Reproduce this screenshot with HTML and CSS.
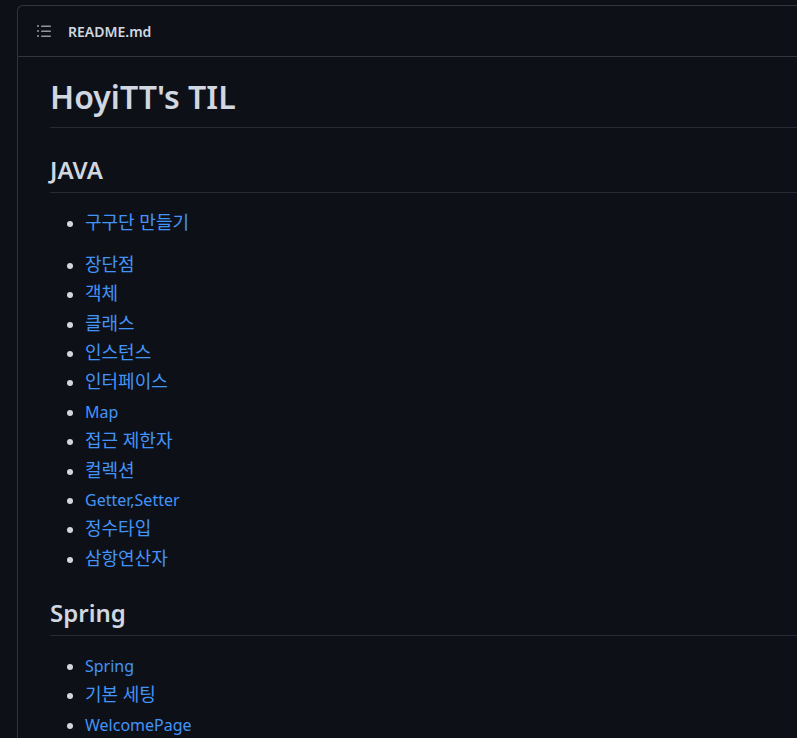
FILE: index.html
```html
<!DOCTYPE html>
<html>

<head>
  <meta charset="UTF-8">
  <title>README.md</title>
  <link rel="stylesheet" href="styles.css">
</head>

<body>
  <div class="readme">
    <div class="readme-head">
      <span class="toc-btn">
        <svg width="16" height="16" viewBox="0 0 16 16" fill="currentColor">
          <path d="M5.75 2.5h8.5a.75.75 0 0 1 0 1.5h-8.5a.75.75 0 0 1 0-1.5Zm0 5h8.5a.75.75 0 0 1 0 1.5h-8.5a.75.75 0 0 1 0-1.5Zm0 5h8.5a.75.75 0 0 1 0 1.5h-8.5a.75.75 0 0 1 0-1.5ZM2 14a1 1 0 1 1 0-2 1 1 0 0 1 0 2Zm1-6a1 1 0 1 1-2 0 1 1 0 0 1 2 0ZM2 4a1 1 0 1 1 0-2 1 1 0 0 1 0 2Z"></path>
        </svg>
      </span>
      <a href="javascript:;" class="file-name">README.md</a>
    </div>
    <article class="markdown">
      <h1>HoyiTT's TIL</h1>

      <h2>JAVA</h2>
      <ul class="first">
        <li><a href="javascript:;" class="ko">구구단 만들기</a></li>
      </ul>
      <ul>
        <li><a href="javascript:;" class="ko">장단점</a></li>
        <li><a href="javascript:;" class="ko">객체</a></li>
        <li><a href="javascript:;" class="ko">클래스</a></li>
        <li><a href="javascript:;" class="ko">인스턴스</a></li>
        <li><a href="javascript:;" class="ko">인터페이스</a></li>
        <li><a href="javascript:;">Map</a></li>
        <li><a href="javascript:;" class="ko">접근 제한자</a></li>
        <li><a href="javascript:;" class="ko">컬렉션</a></li>
        <li><a href="javascript:;">Getter,Setter</a></li>
        <li><a href="javascript:;" class="ko">정수타입</a></li>
        <li><a href="javascript:;" class="ko">삼항연산자</a></li>
      </ul>

      <h2>Spring</h2>
      <ul>
        <li><a href="javascript:;">Spring</a></li>
        <li><a href="javascript:;" class="ko">기본 세팅</a></li>
        <li><a href="javascript:;">WelcomePage</a></li>
      </ul>
    </article>
  </div>
</body>

</html>
```

FILE: styles.css
```css
* {
  margin: 0;
  padding: 0;
  box-sizing: border-box;
}

body {
  background-color: #0d1117;
  color: #d1d7e0;
  font-family: "Noto Sans", "Noto Sans CJK KR", sans-serif;
  font-size: 16px;
  line-height: 1.5;
  overflow: hidden;
}

a {
  text-decoration: none;
  color: #4493f8;
}

.readme {
  width: 900px;
  margin: 5px 0 0 17px;
  border: 1px solid #30363d;
  border-right: none;
  border-radius: 6px 0 0 0;
}

.readme-head {
  display: flex;
  align-items: center;
  gap: 8px;
  height: 51px;
  padding: 0 0 0 10px;
  border-bottom: 1px solid #30363d;
}

.toc-btn {
  display: flex;
  align-items: center;
  justify-content: center;
  width: 32px;
  height: 32px;
  color: #9198a1;
}

.readme-head .file-name {
  color: #d1d7e0;
  font-size: 14px;
  font-weight: 600;
}

.markdown {
  padding: 20px 32px 32px 32px;
}

.markdown h1,
.markdown h2 {
  font-weight: 600;
  line-height: 1.25;
  border-bottom: 1px solid #262c36;
}

.markdown h1 {
  font-size: 32px;
  padding-bottom: 9.6px;
  margin-bottom: 16px;
}

.markdown h2 {
  font-size: 24px;
  padding-bottom: 7.2px;
  margin: 27px 0 18px 0;
}

.markdown ul {
  padding-left: 35px;
  margin-bottom: 16px;
}

.markdown ul.first {
  margin-bottom: 18px;
}

.markdown li {
  line-height: 24px;
}

.markdown li + li {
  margin-top: 5.4px;
}

.markdown li::marker {
  color: #d1d7e0;
}

/* hangul in the reference is drawn a bit bigger than latin */
.markdown .ko {
  font-size: 18px;
  line-height: 16px;
}
```
